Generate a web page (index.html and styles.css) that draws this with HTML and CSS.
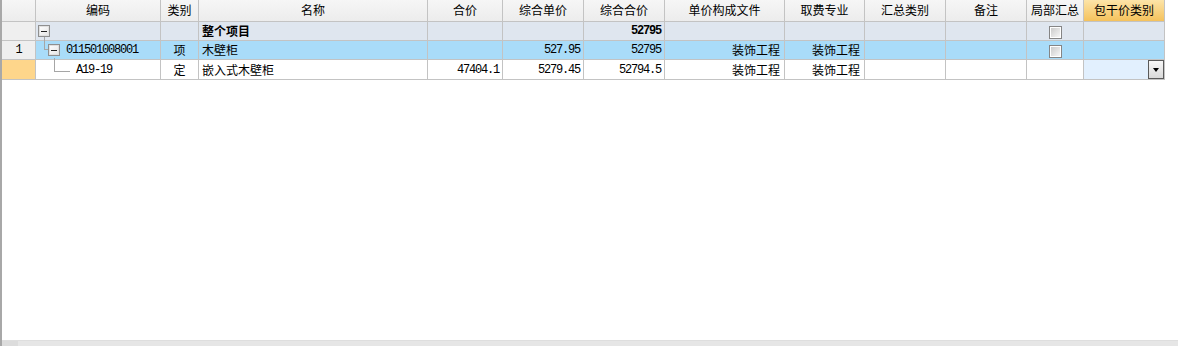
FILE: index.html
```html
<!DOCTYPE html>
<html lang="zh-CN">
<head>
  <meta charset="UTF-8" />
  <title>清单</title>
  <link rel="stylesheet" href="styles.css">
</head>
<body>
  <div class="grid-wrap">
    <div class="grid-area">
      <table class="grid">
        <colgroup>
          <col class="w-rowhead">
          <col class="w-code">
          <col class="w-type">
          <col class="w-name">
          <col class="w-total">
          <col class="w-81">
          <col class="w-81">
          <col class="w-file">
          <col class="w-80">
          <col class="w-81">
          <col class="w-81">
          <col class="w-part">
          <col class="w-81">
        </colgroup>
        <thead>
          <tr>
            <th></th>
            <th>编码</th>
            <th>类别</th>
            <th>名称</th>
            <th>合价</th>
            <th>综合单价</th>
            <th>综合合价</th>
            <th>单价构成文件</th>
            <th>取费专业</th>
            <th>汇总类别</th>
            <th>备注</th>
            <th>局部汇总</th>
            <th class="sorted">包干价类别</th>
          </tr>
        </thead>
        <tbody>
          <tr class="row-root">
            <td class="rowhead"></td>
            <td><div class="tree lvl0"><i class="toggle"></i></div></td>
            <td></td>
            <td class="bold">整个项目</td>
            <td></td>
            <td></td>
            <td class="num bold">52795</td>
            <td></td>
            <td></td>
            <td></td>
            <td></td>
            <td class="center"><i class="check"></i></td>
            <td></td>
          </tr>
          <tr class="row-selected">
            <td class="rowhead num-c">1</td>
            <td><div class="tree lvl1"><span class="elbow"></span><i class="toggle"></i><span class="code">011501008001</span></div></td>
            <td class="center">项</td>
            <td>木壁柜</td>
            <td></td>
            <td class="num">527.95</td>
            <td class="num">52795</td>
            <td class="right">装饰工程</td>
            <td class="right">装饰工程</td>
            <td></td>
            <td></td>
            <td class="center"><i class="check"></i></td>
            <td></td>
          </tr>
          <tr class="row-current">
            <td class="rowhead current"></td>
            <td><div class="tree lvl2"><span class="elbow"></span><span class="code">A19-19</span></div></td>
            <td class="center">定</td>
            <td>嵌入式木壁柜</td>
            <td class="num">47404.1</td>
            <td class="num">5279.45</td>
            <td class="num">52794.5</td>
            <td class="right">装饰工程</td>
            <td class="right">装饰工程</td>
            <td></td>
            <td></td>
            <td></td>
            <td class="editing"><div class="combo"><span class="drop-btn"></span></div></td>
          </tr>
        </tbody>
      </table>
    </div>
    <div class="hscroll"><span class="hscroll-thumb"></span></div>
  </div>
</body>
</html>
```

FILE: styles.css
```css
html, body {
  margin: 0;
  padding: 0;
  background: #fff;
}
body {
  font-family: "Noto Sans CJK SC", "Noto Sans", sans-serif;
  font-size: 12px;
  color: #000;
}
.grid-wrap {
  height: 346px;
  display: flex;
  flex-direction: column;
  border-left: 2px solid #a8a8a8;
  box-sizing: border-box;
}
.grid-area {
  flex: 1;
  background: #fff;
}
.grid {
  table-layout: fixed;
  border-collapse: separate;
  border-spacing: 0;
  width: 1163px;
}
.w-rowhead { width: 34px; }
.w-code { width: 125px; }
.w-type { width: 38px; }
.w-name { width: 229px; }
.w-total { width: 75px; }
.w-81 { width: 81px; }
.w-80 { width: 80px; }
.w-file { width: 120px; }
.w-part { width: 57px; }

.grid th, .grid td {
  border-right: 1px solid #c3c3c3;
  border-bottom: 1px solid #c3c3c3;
  padding: 0 3px;
  white-space: nowrap;
  overflow: visible;
  line-height: 16px;
  font-weight: normal;
  text-align: left;
}
.grid thead tr { height: 22px; }
.grid th {
  text-align: center;
  background: linear-gradient(#f6f6f6, #ececec);
  padding-bottom: 1px;
}
.grid th.sorted {
  background: linear-gradient(#fce4a8, #f5c25c);
}
.grid tbody tr { height: 19px; }
.grid tbody tr.row-current { height: 20px; }
.row-root td { background: #dfe6ef; }
.row-selected td { background: #a9dcf9; }
.row-current td { background: #fff; }
.grid td.rowhead { background: #efefef; text-align: center; }
.grid td.rowhead.current { background: #fed68b; }
.grid td.editing { background: #e2f0fe; padding: 0; }

.grid td.bold { font-weight: bold; }
.grid td.center { text-align: center; }
.grid td.right { text-align: right; padding-right: 4px; }
.grid td.num, .num-c, .code {
  font-family: "Liberation Mono", monospace;
  letter-spacing: -1.2px;
}
.grid td.num { text-align: right; padding-right: 3px; }

/* tree column */
.tree {
  display: flex;
  align-items: center;
  height: 18px;
  margin-left: -1px;
}
.tree .code { margin-left: 6px; }
.elbow {
  align-self: flex-start;
  box-sizing: border-box;
  border-left: 1px solid #a6a6a6;
  border-bottom: 1px solid #a6a6a6;
}
.lvl1 .elbow {
  margin-left: 6px;
  margin-top: -4px;
  width: 4px;
  height: 13px;
}
.lvl2 .elbow {
  margin-left: 16px;
  margin-top: -3px;
  width: 16px;
  height: 14px;
}
.lvl2 .code { margin-left: 6px; }
.toggle {
  position: relative;
  display: inline-block;
  box-sizing: border-box;
  width: 12px;
  height: 12px;
  border: 1px solid #8f8f8f;
  box-shadow: inset 0 0 0 1px #e0e0e0;
  background: linear-gradient(135deg, #fff, #e4e4e4);
}
.toggle::after {
  content: "";
  position: absolute;
  left: 2px;
  right: 2px;
  top: 5px;
  height: 1px;
  background: #222;
}

/* checkbox */
.check {
  display: inline-block;
  vertical-align: middle;
  box-sizing: border-box;
  width: 13px;
  height: 13px;
  border: 1px solid #858585;
  box-shadow: inset 0 0 0 1px #fff;
  background: linear-gradient(135deg, #c6c6c6, #fbfbfb);
}

/* combo in editing cell */
.combo {
  display: flex;
  justify-content: flex-end;
  height: 19px;
}
.drop-btn {
  position: relative;
  box-sizing: border-box;
  width: 16px;
  height: 19px;
  border: 1px solid #5a5a5a;
  background: linear-gradient(#f7f7f7, #d9d9d9);
}
.drop-btn::after {
  content: "";
  position: absolute;
  left: 4px;
  top: 7px;
  border-left: 3.5px solid transparent;
  border-right: 3.5px solid transparent;
  border-top: 4px solid #000;
}

.hscroll {
  height: 5px;
  background: #e6e6e6;
  border-top: 1px solid #dedede;
  display: flex;
}
.hscroll-thumb {
  width: 16px;
  background: #dcdcdc;
}
```
